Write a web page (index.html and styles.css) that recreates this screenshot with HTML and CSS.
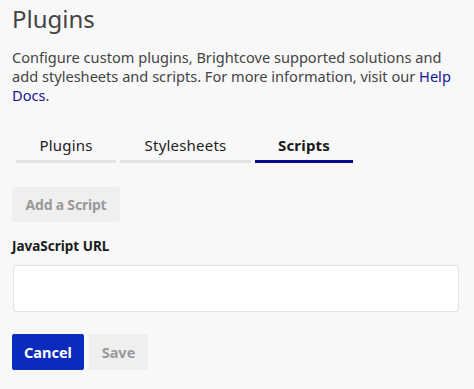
FILE: index.html
```html
<!DOCTYPE html>
<html lang="en">
<head>
    <meta charset="UTF-8">
    <meta name="viewport" content="width=device-width, initial-scale=1.0">
    <title>Plugins</title>
    <link rel="stylesheet" href="styles.css">
</head>
<body>
    <div class="page">
        <h1 class="title">Plugins</h1>
        <p class="intro">Configure custom plugins, Brightcove supported solutions and add stylesheets and scripts. For more information, visit our <a href="#" class="link">Help Docs</a>.</p>

        <div class="tabs">
            <div class="tab tab-plugins">Plugins</div>
            <div class="tab tab-styles">Stylesheets</div>
            <div class="tab tab-scripts active">Scripts</div>
        </div>

        <button class="btn btn-add" disabled>Add a Script</button>

        <label class="field-label" for="script-url">JavaScript URL</label>
        <input class="field-input" id="script-url" type="text">

        <div class="actions">
            <button class="btn btn-primary">Cancel</button>
            <button class="btn btn-save" disabled>Save</button>
        </div>
    </div>
</body>
</html>
```

FILE: styles.css
```css
*{
    margin: 0;
    padding: 0;
    box-sizing: border-box;
}
body{
    background-color: #f8f8f8;
    font-family: 'Noto Sans', sans-serif;
    color: #444;
}
.page{
    padding: 4px 6px 0 12px;
}
.title{
    font-size: 24px;
    line-height: 30px;
    font-weight: normal;
    color: #444;
}
.intro{
    margin-top: 14px;
    font-size: 14.6px;
    line-height: 19px;
    color: #444;
}
.link{
    color: #16169a;
    text-decoration: none;
}
.tabs{
    display: flex;
    gap: 4px;
    margin: 31px 0 0 4px;
}
.tab{
    font-size: 15px;
    line-height: 19px;
    letter-spacing: 0.2px;
    color: #222;
    text-align: center;
    padding-bottom: 5px;
    border-bottom: 3px solid #e4e4e4;
}
.tab-plugins{
    width: 100px;
}
.tab-styles{
    width: 131px;
}
.tab-scripts{
    width: 98px;
}
.tab.active{
    font-weight: bold;
    color: #1a1a1a;
    border-bottom-color: #0a0a8c;
}
.btn{
    display: block;
    height: 36px;
    padding: 0;
    border: none;
    border-radius: 2px;
    font-family: 'Noto Sans', sans-serif;
    font-size: 14.5px;
    font-weight: bold;
    white-space: nowrap;
}
.btn-add{
    width: 108px;
    height: 35px;
    margin-top: 24px;
    background-color: #efefef;
    color: #999;
    font-size: 14px;
    letter-spacing: -0.2px;
}
.field-label{
    display: block;
    margin-top: 16px;
    font-size: 13.5px;
    line-height: 17px;
    font-weight: bold;
    color: #1a1a1a;
}
.field-input{
    display: block;
    width: 446px;
    height: 47px;
    margin: 10px 0 0 1px;
    background-color: #fff;
    border: 1px solid #e2e2e2;
    border-radius: 3px;
}
.actions{
    display: flex;
    gap: 5px;
    margin-top: 22px;
}
.btn-primary{
    width: 72px;
    background-color: #0b2bbd;
    color: #fff;
}
.btn-save{
    width: 59px;
    background-color: #efefef;
    color: #999;
}
```
